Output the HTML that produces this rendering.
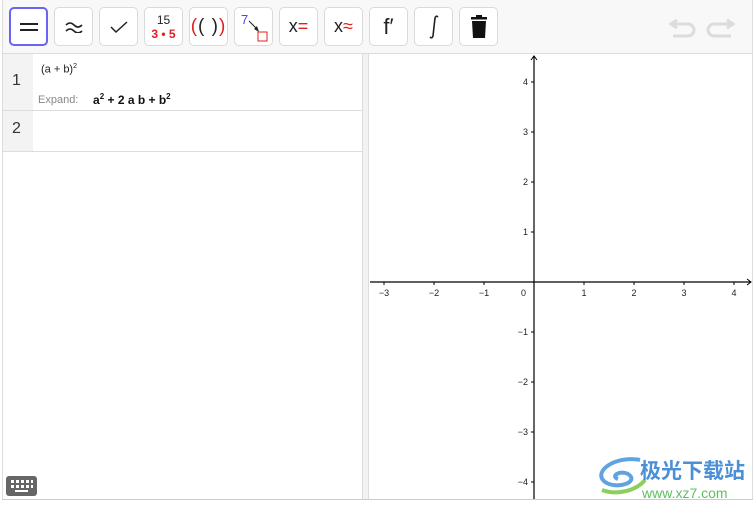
<!DOCTYPE html>
<html><head><meta charset="utf-8"><style>
*{margin:0;padding:0;box-sizing:border-box}
body{width:756px;height:507px;background:#fff;position:relative;overflow:hidden;font-family:"Liberation Sans",Arial,sans-serif}
.a{position:absolute}
.tb{left:2px;top:0;width:751px;height:54px;background:#f8f8f8;border-bottom:1px solid #dcdcdc;border-left:1px solid #ddd;border-right:1px solid #ddd}
.btn{position:absolute;top:7px;width:39px;height:39px;border:1px solid #dadada;border-radius:5px;background:#fff;display:flex;align-items:center;justify-content:center;font-size:20px;color:#222}
.sel{border:2px solid #6a64f6}
.r{color:#e0201f}
</style></head><body>
<div class="a tb"></div>
<div class="btn sel" style="left:9px"><svg width="20" height="10"><path d="M1 2H19M1 8H19" stroke="#222" stroke-width="2"/></svg></div>
<div class="btn" style="left:54px"><svg width="18" height="12"><path d="M1 4Q5 0 9 4T17 4M1 10Q5 6 9 10T17 10" stroke="#222" stroke-width="1.6" fill="none"/></svg></div>
<div class="btn" style="left:99px"><svg width="18" height="14"><path d="M1 7L6 12L17 2" stroke="#222" stroke-width="1.5" fill="none"/></svg></div>
<div class="btn" style="left:144px;flex-direction:column;font-size:12px;line-height:14px"><span>15</span><span class="r" style="font-weight:bold">3 • 5</span></div>
<div class="btn" style="left:189px;font-size:19px;letter-spacing:1px"><span class="r">(</span>(&nbsp;)<span class="r">)</span></div>
<div class="btn" style="left:234px"><svg width="30" height="30"><text x="2" y="12" font-size="13" fill="#4848f0" font-family="Liberation Sans">7</text><path d="M10 9L19 18" stroke="#222" stroke-width="1"/><path d="M15 17L20 20L18 14Z" fill="#222"/><rect x="19" y="20" width="9" height="9" fill="none" stroke="#e0201f"/></svg></div>
<div class="btn" style="left:279px;font-size:18px">x<span class="r">=</span></div>
<div class="btn" style="left:324px;font-size:18px">x<span class="r">≈</span></div>
<div class="btn" style="left:369px;font-size:22px">f′</div>
<div class="btn" style="left:414px"><svg width="12" height="26"><path d="M10 3Q8 1 7 4L5 22Q4 25 2 23" stroke="#222" stroke-width="1.6" fill="none"/></svg></div>
<div class="btn" style="left:459px"><svg width="18" height="24"><rect x="1" y="2" width="16" height="2.5" fill="#111"/><rect x="6" y="0" width="6" height="3" fill="#111"/><path d="M2 6H16L15 23H3Z" fill="#111"/></svg></div>
<svg class="a" style="left:666px;top:14px" width="72" height="26"><path d="M7 10H22A6 6 0 0 1 22 22H7M11 6L5 10L11 14" stroke="#dcdcdc" stroke-width="3" fill="none"/><path d="M65 10H48A6 6 0 0 0 48 22H65M61 6L67 10L61 14" stroke="#dcdcdc" stroke-width="3" fill="none"/></svg>

<div class="a" style="left:2px;top:54px;width:1px;height:446px;background:#ddd"></div>
<div class="a" style="left:3px;top:54px;width:30px;height:97px;background:#f3f3f3"></div>
<div class="a" style="left:3px;top:110px;width:359px;height:1px;background:#ddd"></div>
<div class="a" style="left:3px;top:151px;width:359px;height:1px;background:#ddd"></div>
<div class="a" style="left:12px;top:72px;font-size:16px;color:#333">1</div>
<div class="a" style="left:12px;top:120px;font-size:16px;color:#333">2</div>
<div class="a" style="left:41px;top:63px;font-size:11px;color:#222">(a + b)<sup style="font-size:7px">2</sup></div>
<div class="a" style="left:38px;top:94px;font-size:11px;color:#888">Expand:</div>
<div class="a" style="left:93px;top:92px;font-size:12px;font-weight:bold;color:#111">a<sup style="font-size:8px">2</sup> + 2 a b + b<sup style="font-size:8px">2</sup></div>
<svg class="a" style="left:6px;top:476px" width="31" height="20"><rect width="31" height="20" rx="3" fill="#666"/><g fill="#fff"><rect x="5" y="4" width="3" height="3"/><rect x="10" y="4" width="3" height="3"/><rect x="15" y="4" width="3" height="3"/><rect x="20" y="4" width="3" height="3"/><rect x="25" y="4" width="2" height="3"/><rect x="5" y="9" width="3" height="3"/><rect x="10" y="9" width="3" height="3"/><rect x="15" y="9" width="3" height="3"/><rect x="20" y="9" width="3" height="3"/><rect x="25" y="9" width="2" height="3"/><rect x="9" y="14" width="13" height="2"/></g></svg>

<div class="a" style="left:362px;top:54px;width:7px;height:446px;background:#f2f2f2;border-left:1px solid #ddd;border-right:1px solid #ddd"></div>
<div class="a" style="left:752px;top:54px;width:1px;height:446px;background:#ddd"></div>
<div class="a" style="left:2px;top:499px;width:751px;height:1px;background:#ccc"></div>

<svg class="a" style="left:0;top:0" width="756" height="507" font-family="Liberation Sans" font-size="9" fill="#222">
<path d="M534 56V499M370 282H751" stroke="#000" stroke-width="1.2"/>
<path d="M531 60L534 56L537 60M747 279L751 282L747 285" stroke="#000" fill="none"/>
<g stroke="#000"><path d="M384 282v3M434 282v3M484 282v3M584 282v3M634 282v3M684 282v3M734 282v3M531 82h3M531 132h3M531 182h3M531 232h3M531 332h3M531 382h3M531 432h3M531 482h3"/></g>
<g text-anchor="middle"><text x="384" y="296">−3</text><text x="434" y="296">−2</text><text x="484" y="296">−1</text><text x="584" y="296">1</text><text x="634" y="296">2</text><text x="684" y="296">3</text><text x="734" y="296">4</text></g>
<g text-anchor="end"><text x="526" y="296">0</text><text x="528" y="85">4</text><text x="528" y="135">3</text><text x="528" y="185">2</text><text x="528" y="235">1</text><text x="528" y="335">−1</text><text x="528" y="385">−2</text><text x="528" y="435">−3</text><text x="528" y="485">−4</text></g>
<path d="M640 460C615 455 592 472 605 482C617 490 640 482 628 474C620 470 610 476 618 479" stroke="#5fa3e0" stroke-width="4" fill="none"/>
<path d="M602 490C615 495 635 492 645 480" stroke="#8ccf5a" stroke-width="4" fill="none"/>
<text x="640" y="478" font-size="21" font-weight="bold" fill="#4a8fd8" font-family="Noto Sans CJK SC,sans-serif">极光下载站</text>
<text x="642" y="498" font-size="14" fill="#5cc060">www.xz7.com</text>
</svg>
</body></html>
